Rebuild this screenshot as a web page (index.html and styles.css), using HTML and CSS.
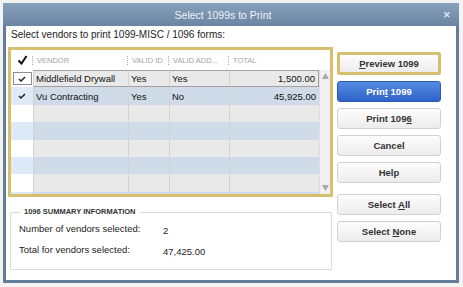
FILE: index.html
```html
<!DOCTYPE html>
<html lang="en">
<head>
  <meta charset="UTF-8">
  <meta name="viewport" content="width=device-width, initial-scale=1.0">
  <title>Select 1099s to Print</title>
  <link rel="stylesheet" href="styles.css">
</head>
<body>
  <div class="dialog">
    <div class="titlebar">
      <span class="title">Select 1099s to Print</span>
      <span class="close">&#x2715;</span>
    </div>
    <div class="dialog-body">
      <p class="intro">Select vendors to print 1099-MISC / 1096 forms:</p>
      <div class="main">
        <div class="left">
          <div class="grid-frame">
            <div class="head">
              <div class="hcell hchk">
                <svg width="11" height="10" viewBox="0 0 11 10"><path d="M1.5 5.5 L4.5 8.5 L9.5 1" fill="none" stroke="#111" stroke-width="2"/></svg>
              </div>
              <div class="hcell"><span class="sep"></span>VENDOR</div>
              <div class="hcell"><span class="sep"></span>VALID ID</div>
              <div class="hcell"><span class="sep"></span>VALID ADD...</div>
              <div class="hcell"><span class="sep"></span>TOTAL</div>
            </div>
            <div class="content">
              <div class="rows">
                <div class="row grey current">
                  <div class="cell chk"><span class="focus"><svg width="8" height="6" viewBox="0 0 8 6"><path d="M1 3 L3 5 L7 1" fill="none" stroke="#222" stroke-width="1.5"/></svg></span></div>
                  <div class="cell">Middlefield Drywall</div>
                  <div class="cell">Yes</div>
                  <div class="cell">Yes</div>
                  <div class="cell num">1,500.00</div>
                </div>
                <div class="row blue">
                  <div class="cell chk"><svg width="8" height="6" viewBox="0 0 8 6"><path d="M1 3 L3 5 L7 1" fill="none" stroke="#222" stroke-width="1.5"/></svg></div>
                  <div class="cell">Vu Contracting</div>
                  <div class="cell">Yes</div>
                  <div class="cell">No</div>
                  <div class="cell num">45,925.00</div>
                </div>
                <div class="row grey"><div class="cell chk"></div><div class="cell"></div><div class="cell"></div><div class="cell"></div><div class="cell"></div></div>
                <div class="row blue"><div class="cell chk"></div><div class="cell"></div><div class="cell"></div><div class="cell"></div><div class="cell"></div></div>
                <div class="row grey"><div class="cell chk"></div><div class="cell"></div><div class="cell"></div><div class="cell"></div><div class="cell"></div></div>
                <div class="row blue"><div class="cell chk"></div><div class="cell"></div><div class="cell"></div><div class="cell"></div><div class="cell"></div></div>
                <div class="row grey"><div class="cell chk"></div><div class="cell"></div><div class="cell"></div><div class="cell"></div><div class="cell"></div></div>
                <div class="row blue"><div class="cell chk"></div><div class="cell"></div><div class="cell"></div><div class="cell"></div><div class="cell"></div></div>
              </div>
              <div class="scrollbar">
                <svg width="7" height="6" viewBox="0 0 7 6"><polygon points="3.5,0 7,6 0,6" fill="#a9a9a9"/></svg>
                <svg width="7" height="6" viewBox="0 0 7 6"><polygon points="0,0 7,0 3.5,6" fill="#a9a9a9"/></svg>
              </div>
            </div>
          </div>

          <fieldset class="summary">
            <legend>1096 SUMMARY INFORMATION</legend>
            <div class="summary-grid">
              <span>Number of vendors selected:</span>
              <span class="value">2</span>
              <span>Total for vendors selected:</span>
              <span class="value">47,425.00</span>
            </div>
          </fieldset>
        </div>

        <div class="buttons">
          <button class="btn default"><u>P</u>review 1099</button>
          <button class="btn primary">Prin<u>t</u> 1099</button>
          <button class="btn">Print 109<u>6</u></button>
          <button class="btn">Cancel</button>
          <button class="btn">Help</button>
          <button class="btn spaced">Select <u>A</u>ll</button>
          <button class="btn">Select <u>N</u>one</button>
        </div>
      </div>
    </div>
  </div>
</body>
</html>
```

FILE: styles.css
```css
body {
  margin: 0;
  background-color: #f3f3f3;
  font-family: "Liberation Sans", Arial, sans-serif;
}
.dialog {
  margin: 3px 0 0 3px;
  width: 456px;
  height: 280px;
  box-sizing: border-box;
  border: 3px solid #647e99;
  border-top: none;
  background-color: #fff;
  display: flex;
  flex-direction: column;
}
.titlebar {
  height: 23px;
  margin: 0 -3px;
  background: linear-gradient(#87a1bb, #6a85a2);
  display: flex;
  align-items: center;
}
.title {
  flex: 1;
  text-align: center;
  color: #eef2f7;
  font-size: 10.5px;
}
.close {
  margin-right: 8px;
  color: #dde5ee;
  font-size: 9px;
  font-weight: bold;
}
.dialog-body {
  flex: 1;
  padding: 3px 15px 0 2px;
}
.intro {
  margin: 0 0 6px 3px;
  font-size: 10px;
  line-height: 12px;
  color: #1c1c1c;
}
.main {
  display: flex;
  gap: 4px;
}
.left {
  width: 325px;
}
.grid-frame {
  width: 319px;
  height: 144px;
  border: 3px solid #d6c06f;
  background-color: #fff;
  display: flex;
  flex-direction: column;
  overflow: hidden;
}
.head {
  height: 20px;
  flex: none;
  display: grid;
  grid-template-columns: 22px 95px 41px 60px 90px;
}
.hcell {
  display: flex;
  align-items: center;
  font-size: 7.5px;
  color: #a3a3a3;
  white-space: nowrap;
}
.hchk {
  justify-content: center;
}
.sep {
  display: inline-block;
  height: 9px;
  margin: 0 4px 0 -1px;
  border-left: 1px dotted #a8a8a8;
}
.content {
  flex: 1;
  display: flex;
  min-height: 0;
}
.rows {
  width: 308px;
}
.row {
  height: 17.4px;
  display: grid;
  grid-template-columns: 22px 95px 41px 60px 90px;
}
.cell {
  box-sizing: border-box;
  border-left: 1px solid #d3d3d3;
  padding-left: 2px;
  font-size: 9.5px;
  color: #111;
  display: flex;
  align-items: center;
  white-space: nowrap;
}
.row.grey .cell {
  background-color: #e9e9e9;
}
.row.blue .cell {
  background-color: #cfdbe8;
}
.row.grey .chk {
  background-color: #fff;
}
.row.blue .chk {
  background-color: #dfeaf8;
}
.chk {
  border-left: none;
  padding-left: 0;
  justify-content: center;
}
.num {
  justify-content: flex-end;
  padding-right: 3px;
}
.row.current .cell:not(.chk) {
  border-top: 1px solid #a2a2a2;
  border-bottom: 1px solid #a2a2a2;
}
.row.current .num {
  border-right: 1px solid #a2a2a2;
}
.focus {
  width: 19px;
  height: 13px;
  box-sizing: border-box;
  border: 1px solid #8c8c8c;
  display: flex;
  align-items: center;
  justify-content: center;
}
.scrollbar {
  width: 11px;
  box-sizing: border-box;
  border-left: 1px solid #dedede;
  background-color: #f0f0f0;
  display: flex;
  flex-direction: column;
  justify-content: space-between;
  align-items: center;
  padding: 3px 0 3px;
}
.summary {
  margin: 10px 0 0 2px;
  width: 322px;
  box-sizing: border-box;
  border: 1px solid #dcdcdc;
  padding: 6px 0 11px 8px;
  min-width: 0;
}
.summary legend {
  font-size: 7.5px;
  line-height: 10px;
  font-weight: bold;
  color: #333;
  padding: 0 3px;
  margin-left: 2px;
}
.summary-grid {
  display: grid;
  grid-template-columns: 144px auto;
  row-gap: 7px;
  font-size: 9.5px;
  line-height: 12px;
  color: #1c1c1c;
}
.summary-grid .value {
  padding-top: 2px;
}
.buttons {
  width: 104px;
  margin-top: 5px;
  display: flex;
  flex-direction: column;
  gap: 6px;
}
.btn {
  height: 21px;
  border: 1px solid #d2d2d2;
  border-radius: 3px;
  background: linear-gradient(#fdfdfd, #ececec);
  font-family: "Liberation Sans", Arial, sans-serif;
  font-size: 9.5px;
  font-weight: bold;
  color: #333;
  padding: 0;
}
.btn.default {
  height: 23px;
  border: 3px solid #d6c06f;
  border-radius: 2px;
}
.btn.primary {
  background: linear-gradient(#558be2, #2f62c7);
  border-color: #2c5ab4;
  color: #fff;
}
.btn.spaced {
  margin-top: 5px;
}
```
